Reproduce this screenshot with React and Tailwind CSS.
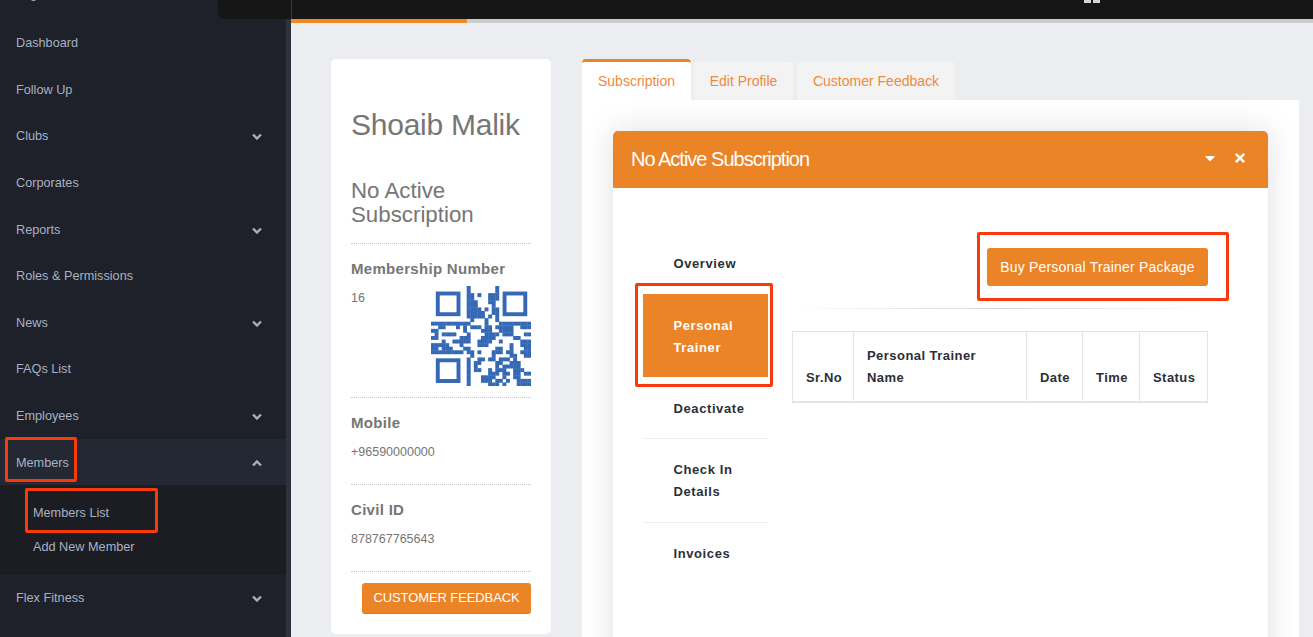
import React from 'react';
import { FaCaretDown, FaTimes } from 'react-icons/fa';

const menu = [
  { label: 'Dashboard' },
  { label: 'Follow Up' },
  { label: 'Clubs', arrow: true },
  { label: 'Corporates' },
  { label: 'Reports', arrow: true },
  { label: 'Roles & Permissions' },
  { label: 'News', arrow: true },
  { label: 'FAQs List' },
  { label: 'Employees', arrow: true },
];

const qrRows = [
  '..........#.......#.........',
  '..........#.......#.........',
  '..........##.#..###.........',
  '..........##....###.........',
  '..........###...##..........',
  '..........###....#..........',
  '..........####.#.##.........',
  '..........#####..##.........',
  '..........#####.#.#.........',
  '...........#...#..#.........',
  '###########....#...#########',
  '..##...#.#.###.##.#####..###',
  '##.......#....###..####.....',
  '.#.####...#....####.###...##',
  '##......###...####.....##...',
  '...#..#####..####..#.....###',
  '#####...#....###......#..###',
  '##.###...##.......##..#...##',
  '#########.##.#...###.##..###',
  '...........#.....#....##..##',
  '..........#..##.##.###.#....',
  '..........#.##....##..###...',
  '..........#.#.....#.#####...',
  '..........#.##..#.###..###..',
  '..........#.....###.##.##.##',
  '..........#...####..#..##...',
  '..........#...###.##.#..####',
  '..........#.....###.#...####',
];

function QrCode() {
  return (
    <svg viewBox="0 0 28 28" className="w-[100px] h-[100px] shrink-0 blur-[0.4px]" fill="#3569b6">
      {qrRows.map((row, y) =>
        row.split('').map((c, x) =>
          c === '#' ? <rect key={x + '-' + y} x={x} y={y} width="1.1" height="1.1" /> : null
        )
      )}
      <rect x="1.9" y="2.1" width="5.8" height="5.8" fill="none" stroke="#3569b6" strokeWidth="1.1" />
      <rect x="20.6" y="2.1" width="5.8" height="5.8" fill="none" stroke="#3569b6" strokeWidth="1.1" />
      <rect x="1.9" y="20.8" width="5.8" height="5.8" fill="none" stroke="#3569b6" strokeWidth="1.1" />
    </svg>
  );
}

function Chevron({ up }) {
  return (
    <svg viewBox="0 0 10 7" className="w-[10px] h-[7px]" fill="none" stroke="currentColor" strokeWidth="2.3">
      <path d={up ? 'M1 5.5 L5 1.5 L9 5.5' : 'M1 1.5 L5 5.5 L9 1.5'} />
    </svg>
  );
}

function MenuRow({ label, arrow, up, active }) {
  return (
    <div className={`h-[46.6px] pt-[2px] pl-4 pr-[24px] flex items-center justify-between text-[12.7px] text-[#a7b1c2] ${active ? 'bg-[#242832]' : ''}`}>
      <span>{label}</span>
      {arrow && <Chevron up={up} />}
    </div>
  );
}

function Sidebar() {
  return (
    <aside className="w-[291px] h-full shrink-0 bg-[#1e212a] border-r-[5px] border-[#2f323c]">
      <div className="h-[19.5px] flex justify-between -mr-[5px] overflow-hidden">
        <span className="pl-4 -mt-[15px] text-[12.7px] text-[#a7b1c2]">Log</span>
        <div className="w-[73px] h-[19px] bg-[#161616] rounded-bl-md"></div>
      </div>
      {menu.map((m) => (
        <MenuRow key={m.label} {...m} />
      ))}
      <MenuRow label="Members" arrow up active />
      <div className="h-[88.5px] bg-[#1b1d23] pt-[11px] pl-[33px] text-[12.7px] text-[#a7b1c2] border-b border-[#191b20]">
        <div className="h-[34px] flex items-center">Members List</div>
        <div className="h-[34px] flex items-center">Add New Member</div>
      </div>
      <MenuRow label="Flex Fitness" arrow />
    </aside>
  );
}

function InfoBlock({ label, value }) {
  return (
    <div className="h-[87px] pt-[16px] border-b border-dotted border-[#c9c9c9]">
      <div className="text-[15px] leading-[18px] font-bold tracking-[0.3px] text-[#767676]">{label}</div>
      <div className="mt-[11px] text-[12.5px] leading-[18px] text-[#767676]">{value}</div>
    </div>
  );
}

function ProfileCard() {
  return (
    <div className="w-[220px] h-[575px] shrink-0 bg-white rounded-[5px] px-5 pt-[48px] text-[#767676]">
      <h1 className="text-[30px] leading-[36px] tracking-[-0.25px]">Shoaib Malik</h1>
      <div className="mt-[36px] text-[22.3px] leading-[24px] pb-[16px] border-b border-dotted border-[#c9c9c9]">
        No Active Subscription
      </div>
      <div className="h-[154px] pt-[16px] border-b border-dotted border-[#c9c9c9]">
        <div className="text-[15px] leading-[18px] font-bold tracking-[0.3px]">Membership Number</div>
        <div className="flex justify-between items-start mt-[8px]">
          <span className="mt-[3px] text-[12.5px] leading-[18px]">16</span>
          <QrCode />
        </div>
      </div>
      <InfoBlock label="Mobile" value="+96590000000" />
      <InfoBlock label="Civil ID" value="878767765643" />
      <div className="flex justify-end mt-[11px]">
        <button className="w-[169px] h-[31px] bg-[#eb8426] border-b border-[#d97a22] rounded-[3px] text-white text-[13px] tracking-[-0.1px]">
          CUSTOMER FEEDBACK
        </button>
      </div>
    </div>
  );
}

function TrainerTable() {
  const cols = [
    ['Sr.No', 'w-[61px]'],
    ['Personal Trainer', 'w-[173px]', 'Name'],
    ['Date', 'w-[56px]'],
    ['Time', 'w-[57px]'],
    ['Status', 'w-[68px]'],
  ];
  return (
    <table className="mt-[22px] w-[415px] table-fixed border-collapse text-[13px] leading-[22px] tracking-[0.45px] font-bold text-[#2b2f3a]">
      <thead>
        <tr>
          {cols.map(([name, w, second]) => (
            <th key={name} className={`${w} h-[70px] align-bottom text-left pl-[13px] pr-2 pb-[12px] font-bold border border-[#e2e4e9] border-b-[2px]`}>
              {name}
              {second && <br />}
              {second}
            </th>
          ))}
        </tr>
      </thead>
    </table>
  );
}

function SubscriptionPanel() {
  return (
    <div className="ml-[31px] mt-[31px] w-[655px] h-[600px] bg-white rounded-t-[5px] shadow-[0_0_32px_rgba(0,0,0,0.13)]">
      <div className="h-[57px] bg-[#eb8426] rounded-t-[5px] pl-[18px] pr-[21px] flex items-center justify-between text-white">
        <span className="text-[20px] tracking-[-1px] pb-[1px]">No Active Subscription</span>
        <div className="flex items-center gap-[15px] -mt-[3px]">
          <FaCaretDown className="text-[16px]" />
          <FaTimes className="text-[14px]" />
        </div>
      </div>
      <div className="flex pl-[30px] pt-[46px]">
        <div className="w-[125px] shrink-0 text-[13px] leading-[22px] font-bold tracking-[0.6px] text-[#2b2f3a]">
          <div className="pt-[19px] pb-[19px] pl-[30.5px]">Overview</div>
          <div className="pt-[21px] pb-[18px] pl-[30.5px] bg-[#eb8426] text-white">Personal<br />Trainer</div>
          <div className="pt-[21px] pb-[18px] pl-[30.5px] border-b border-[#eceef1]">Deactivate</div>
          <div className="pt-5 pb-[19px] pl-[30.5px] border-b border-[#eceef1]">Check In<br />Details</div>
          <div className="pt-5 pb-[19px] pl-[30.5px]">Invoices</div>
        </div>
        <div className="ml-6 w-[416px]">
          <div className="flex justify-end pt-[14px]">
            <button className="w-[221px] h-[38px] bg-[#eb8426] rounded-[3px] text-white text-[14px] tracking-[0.2px]">
              Buy Personal Trainer Package
            </button>
          </div>
          <div className="mt-[22px] h-px bg-gradient-to-r from-transparent via-[#d5d5d5] to-transparent"></div>
          <TrainerTable />
        </div>
      </div>
    </div>
  );
}

function Main() {
  return (
    <main className="flex-1 min-w-0 h-full overflow-hidden bg-[#ebedf1]">
      <div className="h-[19px] bg-[#161616] border-l border-[#3a3a3a] overflow-hidden pl-[792px]">
        <div className="flex gap-[2px]">
          <span className="w-[7px] h-[3px] bg-[#d5d5d5]"></span>
          <span className="w-[7px] h-[3px] bg-[#d5d5d5]"></span>
        </div>
      </div>
      <div className="h-[4px] bg-[#cbcbcb]">
        <div className="w-[176px] h-full bg-[#ee8a25]"></div>
      </div>
      <div className="flex pl-10 pt-[36px]">
        <ProfileCard />
        <div className="ml-[31px] w-[717px]">
          <div className="h-[41px] flex items-end gap-[3px] text-[14px] text-[#ee8a3c]">
            <div className="w-[109px] h-[41px] bg-white border-t-[3px] border-[#eb8426] rounded-t-[4px] flex items-center justify-center">Subscription</div>
            <div className="w-[99px] h-[38px] bg-[#f3f3f4] rounded-t-[3px] flex items-center justify-center">Edit Profile</div>
            <div className="w-[158px] h-[38px] ml-px bg-[#f3f3f4] rounded-t-[3px] flex items-center justify-center">Customer Feedback</div>
          </div>
          <div className="h-[600px] bg-white overflow-hidden">
            <SubscriptionPanel />
          </div>
        </div>
      </div>
    </main>
  );
}

export default function App() {
  return (
    <div className="relative flex w-[1313px] h-[637px] overflow-hidden font-['Liberation_Sans',Arial,sans-serif]">
      <Sidebar />
      <Main />
      {/* annotation boxes drawn over the screenshot */}
      <div className="absolute left-[5px] top-[437px] w-[72px] h-[45px] border-[3px] border-[#f83a0c] rounded-[2px]"></div>
      <div className="absolute left-[25px] top-[488px] w-[133px] h-[45px] border-[3px] border-[#f83a0c] rounded-[2px]"></div>
      <div className="absolute left-[635px] top-[283px] w-[138px] h-[104px] border-[3px] border-[#f83a0c] rounded-[2px]"></div>
      <div className="absolute left-[977px] top-[232px] w-[252px] h-[69px] border-[3px] border-[#f83a0c] rounded-[2px]"></div>
    </div>
  );
}
